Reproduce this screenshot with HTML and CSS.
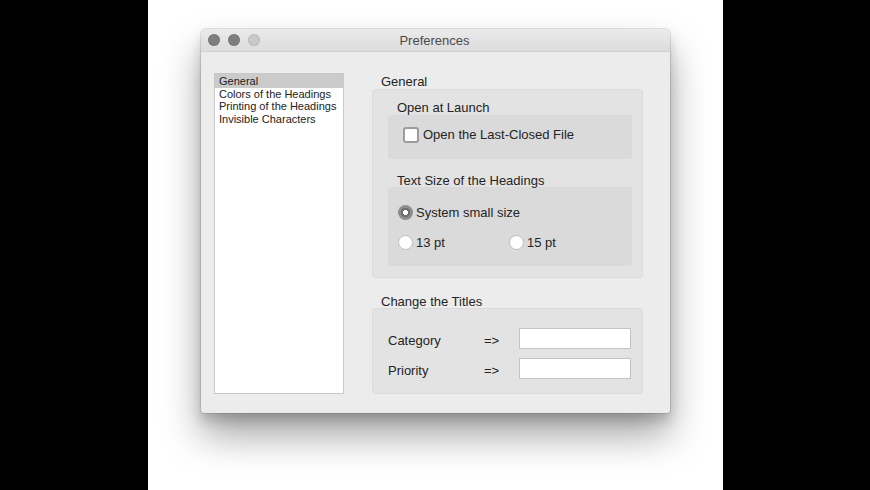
FILE: index.html
```html
<!DOCTYPE html>
<html>
<head>
<meta charset="utf-8">
<link rel="stylesheet" href="styles.css">
</head>
<body>
<div class="stage">
  <div class="window">
    <div class="titlebar">
      <div class="lights">
        <span class="light"></span>
        <span class="light"></span>
        <span class="light off"></span>
      </div>
      <div class="title">Preferences</div>
    </div>
    <div class="content">
      <ul class="list">
        <li class="selected">General</li>
        <li>Colors of the Headings</li>
        <li>Printing of the Headings</li>
        <li>Invisible Characters</li>
      </ul>
      <div class="panel">
        <div class="label">General</div>
        <div class="group group-general">
          <div class="sublabel">Open at Launch</div>
          <div class="inner inner-launch">
            <label class="check-row"><span class="checkbox"></span>Open the Last-Closed File</label>
          </div>
          <div class="sublabel second">Text Size of the Headings</div>
          <div class="inner inner-size">
            <div class="radio-row"><span class="radio on"></span>System small size</div>
            <div class="radio-row pair">
              <span class="opt"><span class="radio"></span>13 pt</span>
              <span class="opt"><span class="radio"></span>15 pt</span>
            </div>
          </div>
        </div>
        <div class="label titles-label">Change the Titles</div>
        <div class="group group-titles">
          <div class="field-row">
            <span class="fname">Category</span>
            <span class="arrow">=&gt;</span>
            <span class="input"></span>
          </div>
          <div class="field-row">
            <span class="fname">Priority</span>
            <span class="arrow">=&gt;</span>
            <span class="input"></span>
          </div>
        </div>
      </div>
    </div>
  </div>
</div>
</body>
</html>
```
FILE: styles.css
```css
html, body {
  margin: 0;
  padding: 0;
  background: #000;
  height: 490px;
  overflow: hidden;
}
body {
  font-family: "Liberation Sans", Arial, sans-serif;
  color: #242424;
}
.stage {
  margin-left: 148px;
  width: 575px;
  height: 490px;
  background: #fff;
  padding-top: 29px;
  box-sizing: border-box;
}
.window {
  margin-left: 53px;
  width: 469px;
  height: 384px;
  background: #ececec;
  border-radius: 5px 5px 3px 3px;
  box-shadow: 0 0 0 1px rgba(0,0,0,0.10), 0 22px 38px rgba(0,0,0,0.36), 0 8px 12px rgba(0,0,0,0.16);
  display: flex;
  flex-direction: column;
  overflow: hidden;
}
.titlebar {
  height: 22px;
  background: linear-gradient(#ebebeb, #dcdcdc);
  border-bottom: 1px solid #d0d0d0;
  display: flex;
  align-items: center;
}
.lights {
  display: flex;
  gap: 8px;
  padding-left: 7px;
}
.light {
  width: 12px;
  height: 12px;
  border-radius: 50%;
  background: #7e7e7e;
  box-shadow: inset 0 0 0 1px rgba(0,0,0,0.08);
}
.light.off {
  background: #c9c9c9;
}
.title {
  flex: 1;
  text-align: center;
  font-size: 13px;
  color: #4a4a4a;
  margin-right: 50px;
  margin-left: -11px;
  padding-top: 1px;
}
.content {
  display: flex;
  padding: 21px 27px 19px 13px;
  flex: 1;
}
.list {
  list-style: none;
  margin: 0;
  padding: 0;
  width: 130px;
  height: 321px;
  box-sizing: border-box;
  background: #fff;
  border: 1px solid #c9c9c9;
  font-size: 11px;
  line-height: 12.5px;
  color: #222;
}
.list li {
  padding-left: 4px;
}
.list li.selected {
  background: #cbcbcb;
  padding-top: 1px;
}
.panel {
  margin-left: 28px;
  width: 271px;
  font-size: 13px;
}
.label {
  line-height: 15px;
  padding-top: 1px;
  padding-left: 9px;
}
.group {
  background: #e3e3e3;
  border-radius: 4px;
  box-shadow: inset 0 0 0 1px rgba(0,0,0,0.03);
}
.group-general {
  height: 189px;
  padding: 10px 11px 0 16px;
  box-sizing: border-box;
}
.sublabel {
  line-height: 14px;
  padding-top: 2px;
  padding-left: 9px;
}
.sublabel.second {
  margin-top: 13px;
  line-height: 13px;
}
.inner {
  background: #dadada;
  border-radius: 3px;
  box-sizing: border-box;
}
.inner-launch {
  height: 44px;
  padding: 12px 0 0 15px;
}
.check-row {
  display: flex;
  align-items: center;
  line-height: 16px;
  gap: 4px;
}
.checkbox {
  width: 12px;
  height: 12px;
  background: #fff;
  border: 2px solid #9c9c9c;
  border-radius: 3px;
  margin-top: -1px;
}
.inner-size {
  height: 79px;
  padding: 18px 0 0 10px;
}
.radio-row {
  display: flex;
  align-items: center;
  line-height: 16px;
  gap: 3px;
}
.radio-row.pair {
  margin-top: 14px;
  gap: 0;
}
.opt {
  display: flex;
  align-items: center;
  gap: 3px;
  width: 111px;
}
.radio {
  width: 15px;
  height: 15px;
  border-radius: 50%;
  box-sizing: border-box;
  background: #fff;
  border: 1px solid #bdbdbd;
  margin-top: -1px;
}
.radio.on {
  border: none;
  background: radial-gradient(circle, #fff 0 2.2px, #6f6f6f 2.8px 4.5px, #8c8c8c 5px 7.5px);
}
.titles-label {
  margin-top: 15px;
  line-height: 13px;
  padding-top: 2px;
}
.group-titles {
  height: 86px;
  padding: 20px 12px 0 16px;
  box-sizing: border-box;
}
.field-row {
  display: flex;
  align-items: center;
  height: 21px;
}
.field-row + .field-row {
  margin-top: 9px;
}
.fname {
  width: 96px;
  margin-top: 4px;
}
.arrow {
  width: 35px;
  margin-top: 4px;
}
.input {
  width: 112px;
  height: 21px;
  box-sizing: border-box;
  background: #fff;
  border: 1px solid #c4c4c4;
}
```
